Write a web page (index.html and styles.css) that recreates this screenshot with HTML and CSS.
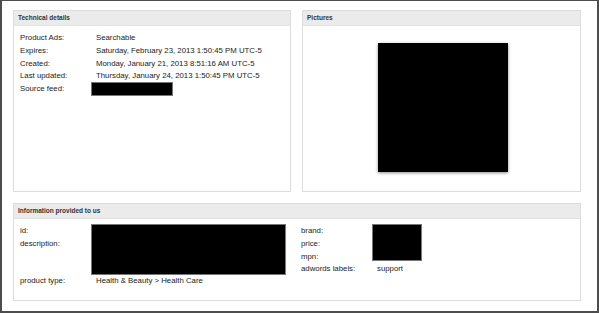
FILE: index.html
```html
<!DOCTYPE html>
<html lang="en">
<head>
  <meta charset="UTF-8">
  <meta name="viewport" content="width=device-width, initial-scale=1.0">
  <title>Product details</title>
  <link rel="stylesheet" href="styles.css">
</head>
<body>

<div class="frame">
  <div class="panels">

    <!-- Technical details -->
    <div class="panel panel-tech">
      <div class="panel-head">Technical details</div>
      <div class="panel-body">
        <div class="fields">
          <span class="label">Product Ads:</span><span class="value">Searchable</span>
          <span class="label">Expires:</span><span class="value">Saturday, February 23, 2013 1:50:45 PM UTC-5</span>
          <span class="label">Created:</span><span class="value">Monday, January 21, 2013 8:51:16 AM UTC-5</span>
          <span class="label">Last updated:</span><span class="value">Thursday, January 24, 2013 1:50:45 PM UTC-5</span>
          <span class="label">Source feed:</span><span class="value"><span class="redact redact-feed"></span></span>
        </div>
      </div>
    </div>

    <!-- Pictures -->
    <div class="panel panel-pics">
      <div class="panel-head">Pictures</div>
      <div class="panel-body pics-body">
        <div class="picture"></div>
      </div>
    </div>

    <!-- Information provided to us -->
    <div class="panel panel-info">
      <div class="panel-head">Information provided to us</div>
      <div class="panel-body info-body">
        <div class="fields info-left">
          <span class="label">id:<br>description:</span>
          <span class="value"><span class="redact redact-desc"></span></span>
          <span class="label">product type:</span><span class="value">Health &amp; Beauty &gt; Health Care</span>
        </div>
        <div class="fields info-right">
          <span class="label">brand:</span>
          <span class="value value-box"><span class="redact redact-price"></span></span>
          <span class="label">price:</span>
          <span class="label">mpn:</span>
          <span class="label">adwords labels:</span><span class="value">support</span>
        </div>
      </div>
    </div>

  </div>
</div>

</body>
</html>
```

FILE: styles.css
```css
:root {
  --frame: #4d4d4d;
  --border: #dcdcdc;
  --head-bg: #ebebeb;
  --text: #222;
}

html, body {
  margin: 0;
  padding: 0;
  background: #fff;
}

body {
  font-family: 'Liberation Sans', Arial, sans-serif;
  font-size: 7.8px;
  color: var(--text);
}

.frame {
  box-sizing: border-box;
  width: 599px;
  height: 313px;
  border-top: 1px solid var(--frame);
  border-left: 2px solid var(--frame);
  border-right: 2px solid var(--frame);
  border-bottom: 2px solid var(--frame);
  padding: 9px 0 0 11px;
}

.panels {
  display: grid;
  grid-template-columns: 278px 279px;
  grid-template-rows: 182px 98px;
  gap: 11px;
}

.panel {
  box-sizing: border-box;
  border: 1px solid var(--border);
  display: flex;
  flex-direction: column;
}

.panel-info {
  grid-column: 1 / 3;
}

.panel-head {
  height: 14px;
  line-height: 14px;
  background: var(--head-bg);
  border-bottom: 1px solid #e2e2e2;
  padding-left: 4px;
  font-size: 6.5px;
  font-weight: bold;
  color: #333;
}

.panel-body {
  padding: 6px 6px 0;
}

.fields {
  display: grid;
  grid-template-columns: 76px auto;
  justify-content: start;
  line-height: 12.75px;
}

.label,
.value {
  white-space: nowrap;
}

.redact {
  display: block;
  background: #000;
  margin-left: -5px;
  box-sizing: border-box;
  border: 1px solid #777;
}

.redact-feed {
  width: 82px;
  height: 14px;
  margin-top: -1px;
}

.pics-body {
  display: flex;
  justify-content: center;
  padding-top: 17px;
  padding-left: 8px;
}

.picture {
  width: 130px;
  height: 129px;
  background: #000;
  box-shadow: 0 1px 3px rgba(0, 0, 0, 0.45);
}

.info-body {
  display: grid;
  grid-template-columns: 281px auto;
}

.redact-desc {
  width: 195px;
  height: 51px;
  margin-top: -1px;
}

.info-right {
  grid-template-rows: repeat(4, 12.75px);
}

.info-right .value-box {
  grid-column: 2;
  grid-row: 1 / 4;
}

.info-right .label {
  grid-column: 1;
}

.redact-price {
  width: 50px;
  height: 37px;
  margin-top: -1px;
}
```
